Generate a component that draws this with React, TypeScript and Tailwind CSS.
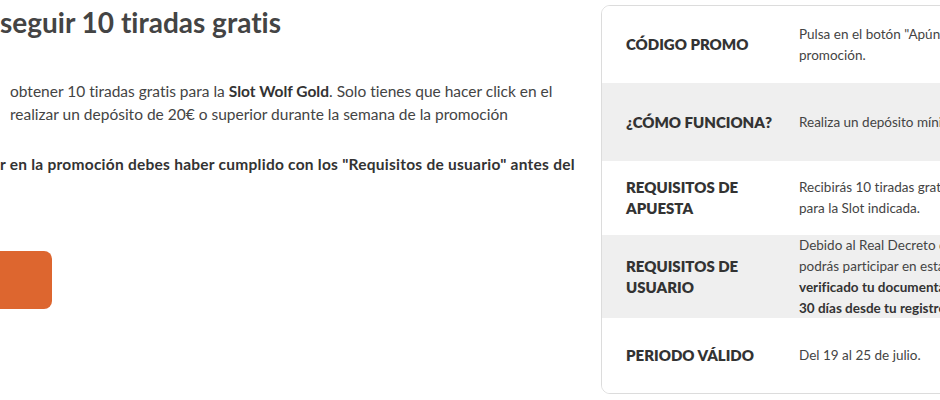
import React from 'react';

const rows = [
  {
    label: ['CÓDIGO PROMO'],
    value: [
      { text: 'Pulsa en el botón "Apúntate" para participar en la', bold: false },
      { text: 'promoción.', bold: false },
    ],
    height: 'h-[77px]',
    shade: false,
  },
  {
    label: ['¿CÓMO FUNCIONA?'],
    value: [{ text: 'Realiza un depósito mínimo de 20€ durante la semana.', bold: false }],
    height: 'h-[78px]',
    shade: true,
  },
  {
    label: ['REQUISITOS DE', 'APUESTA'],
    value: [
      { text: 'Recibirás 10 tiradas gratis de 0,20€ cada una', bold: false },
      { text: 'para la Slot indicada.', bold: false },
    ],
    height: 'h-[74px]',
    shade: false,
  },
  {
    label: ['REQUISITOS DE', 'USUARIO'],
    value: [
      { text: 'Debido al Real Decreto de Publicidad, solo', bold: false },
      { text: 'podrás participar en esta promoción si has', bold: false },
      { text: 'verificado tu documentación pasados', bold: true },
      { text: '30 días desde tu registro.', bold: true },
    ],
    height: 'h-[83px]',
    shade: true,
  },
  {
    label: ['PERIODO VÁLIDO'],
    value: [{ text: 'Del 19 al 25 de julio.', bold: false }],
    height: 'h-[75px]',
    shade: false,
  },
];

export default function App() {
  return (
    <div
      className="w-[940px] h-[400px] overflow-hidden bg-white flex [font-variant-ligatures:none]"
      style={{ fontFamily: 'Lato, "Open Sans", sans-serif' }}
    >
      {/* left column, cut off at the window edge */}
      <div className="w-[601px] shrink-0 flex flex-col text-[#444]">
        <h1 className="mt-[5px] text-[28px] leading-[34px] font-bold text-[#444] whitespace-nowrap">
          seguir 10 tiradas gratis
        </h1>
        <div className="mt-[41px] pl-[10px] text-[15.5px] leading-[23px] whitespace-nowrap">
          <p>
            obtener 10 tiradas gratis para la <b className="text-[#333]">Slot Wolf Gold</b>. Solo tienes que hacer click en el
          </p>
          <p>realizar un depósito de 20€ o superior durante la semana de la promoción</p>
        </div>
        <p className="mt-[27px] text-[15.5px] leading-[23px] font-bold tracking-[0.25px] text-[#333] whitespace-nowrap">
          r en la promoción debes haber cumplido con los "Requisitos de usuario" antes del
        </p>
        <div className="mt-[75px] -ml-[20px] w-[72px] h-[58px] rounded-lg bg-[#dd662f]" />
      </div>

      {/* promo details table */}
      <div className="mt-[5px] w-[400px] shrink-0 self-start border border-[#dcdcdc] rounded-[9px] overflow-hidden">
        {rows.map((row, i) => (
          <div
            key={i}
            className={`flex items-center ${row.height} ${row.shade ? 'bg-[#efefef]' : 'bg-white'}`}
          >
            <div className="w-[197px] shrink-0 pl-[24px] text-[15px] leading-[21px] font-extrabold text-[#333]">
              {row.label.map(l => (
                <div key={l}>{l}</div>
              ))}
            </div>
            <div className="text-[13.5px] leading-[21px] text-[#444] whitespace-nowrap">
              {row.value.map(v => (
                <div key={v.text} className={v.bold ? 'font-bold text-[#333]' : ''}>
                  {v.text}
                </div>
              ))}
            </div>
          </div>
        ))}
      </div>
    </div>
  );
}
